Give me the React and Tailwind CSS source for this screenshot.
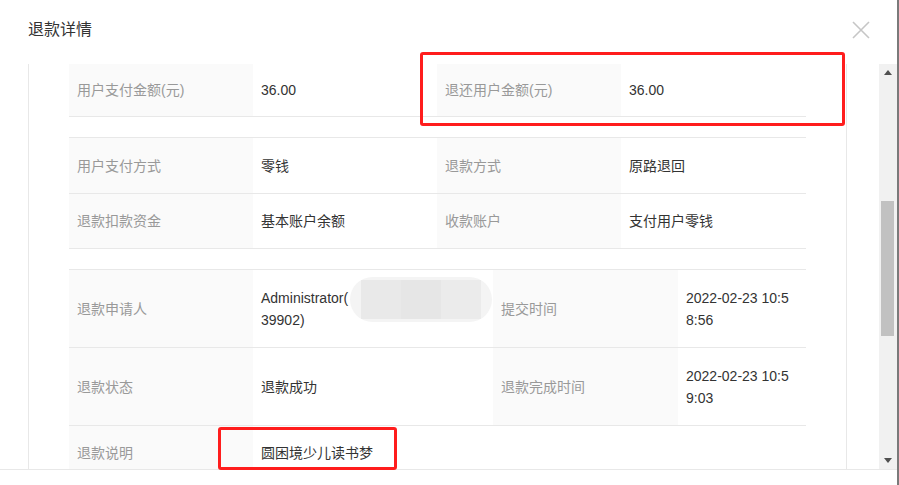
import React from "react";

// 标签单元格
const Label = ({ children }) => (
  <div className="bg-[#fafafa] px-2 flex items-center text-[#999]">{children}</div>
);

// 值单元格
const Value = ({ children, className = "" }) => (
  <div className={`px-2 flex items-center text-[#333] ${className}`}>{children}</div>
);

const CloseIcon = () => (
  <svg width="18" height="18" viewBox="0 0 18 18" fill="none" stroke="#c6c6c6" strokeWidth="1.6">
    <path d="M1 1L17 17M17 1L1 17" />
  </svg>
);

const Arrow = ({ up }) => (
  <svg width="8" height="5" viewBox="0 0 8 5" fill="#505050">
    <path d={up ? "M0 5L4 0L8 5Z" : "M0 0L8 0L4 5Z"} />
  </svg>
);

const cols4 = "grid grid-cols-[184px_184px_184px_185px]";
const colsB = "grid grid-cols-[184px_240px_185px_128px]";

export default function App() {
  return (
    <div
      className="relative w-[899px] h-[485px] bg-white flex overflow-hidden text-[14px] leading-[22px]"
      style={{ fontFamily: '"Liberation Sans", "Noto Sans CJK SC", sans-serif' }}
    >
      <div className="flex-1 flex flex-col">
        {/* 头部 */}
        <div className="h-[64px] shrink-0 flex items-start justify-between pl-[28px] pr-[27px]">
          <h2 className="pt-[19px] text-[16px] leading-[22px] text-[#333]">退款详情</h2>
          <div className="pt-[21px]">
            <CloseIcon />
          </div>
        </div>

        {/* 内容 */}
        <div className="h-[405px] shrink-0 flex">
          <div className="flex-1 overflow-hidden pl-[28px] pr-[32px]">
            <div className="h-full border-x border-[#e8e8e8] px-[40px]">
              {/* 金额 */}
              <div className={`${cols4} h-[53px] border-b border-[#e8e8e8]`}>
                <Label>用户支付金额(元)</Label>
                <Value>36.00</Value>
                <Label>退还用户金额(元)</Label>
                <Value>36.00</Value>
              </div>

              {/* 支付方式 */}
              <div className="mt-[20px] border-t border-[#e8e8e8]">
                <div className={`${cols4} h-[56px] border-b border-[#e8e8e8]`}>
                  <Label>用户支付方式</Label>
                  <Value>零钱</Value>
                  <Label>退款方式</Label>
                  <Value>原路退回</Value>
                </div>
                <div className={`${cols4} h-[55px] border-b border-[#e8e8e8]`}>
                  <Label>退款扣款资金</Label>
                  <Value>基本账户余额</Value>
                  <Label>收款账户</Label>
                  <Value>支付用户零钱</Value>
                </div>
              </div>

              {/* 申请信息 */}
              <div className="mt-[20px] border-t border-[#e8e8e8]">
                <div className={`${colsB} h-[78px] border-b border-[#e8e8e8]`}>
                  <Label>退款申请人</Label>
                  <Value className="relative">
                    <span>
                      Administrator(
                      <br />
                      39902)
                    </span>
                    {/* 打码 */}
                    <div className="absolute left-[97px] top-[7px] w-[142px] h-[45px] rounded-full bg-[#f4f4f4] flex items-center justify-center">
                      <div className="flex h-[39px] w-[120px]">
                        <div className="flex-1 bg-[#e9e9e9]" />
                        <div className="flex-1 bg-[#e6e6e6]" />
                        <div className="flex-1 bg-[#ebebeb]" />
                      </div>
                    </div>
                  </Value>
                  <Label>提交时间</Label>
                  <Value>
                    <span>
                      2022-02-23 10:5
                      <br />
                      8:56
                    </span>
                  </Value>
                </div>
                <div className={`${colsB} h-[78px] border-b border-[#e8e8e8]`}>
                  <Label>退款状态</Label>
                  <Value>退款成功</Value>
                  <Label>退款完成时间</Label>
                  <Value>
                    <span>
                      2022-02-23 10:5
                      <br />
                      9:03
                    </span>
                  </Value>
                </div>
                <div className="grid grid-cols-[184px_553px] h-[55px] border-b border-[#e8e8e8]">
                  <Label>退款说明</Label>
                  <Value>圆困境少儿读书梦</Value>
                </div>
              </div>
            </div>
          </div>

          {/* 滚动条 */}
          <div className="w-[18px] bg-[#f1f1f1] flex flex-col items-center">
            <div className="h-[17px] flex items-center justify-center">
              <Arrow up />
            </div>
            <div className="h-[120px]" />
            <div className="h-[135px] w-[13px] -ml-[1px] bg-[#c1c1c1]" />
            <div className="flex-1" />
            <div className="h-[17px] flex items-center justify-center">
              <Arrow />
            </div>
          </div>
        </div>

        {/* 底部 */}
        <div className="flex-1 border-t border-[#e8e8e8]" />
      </div>
      <div className="w-[2px] bg-[#7a7a7a]" />

      {/* 标注红框 */}
      <div className="absolute left-[420px] top-[52px] w-[425px] h-[74px] border-[3px] border-[#ff1d1d] rounded-[3px]" />
      <div className="absolute left-[218px] top-[427px] w-[179px] h-[43px] border-[3px] border-[#ff1d1d] rounded-[3px]" />
    </div>
  );
}
